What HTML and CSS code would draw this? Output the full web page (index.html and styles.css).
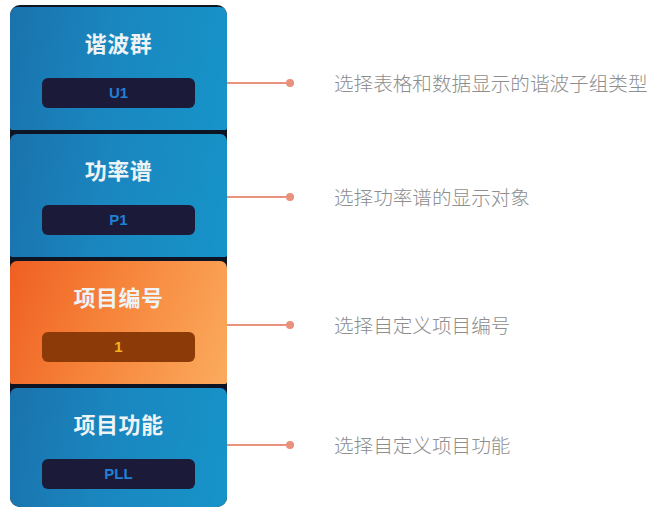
FILE: index.html
```html
<!DOCTYPE html>
<html lang="zh-CN">
<head>
<meta charset="utf-8">
<link rel="stylesheet" href="styles.css">
</head>
<body>
<div class="page">
  <div class="panel">
    <div class="card blue">
      <div class="title">谐波群</div>
      <div class="bar">U1</div>
    </div>
    <div class="card blue">
      <div class="title">功率谱</div>
      <div class="bar">P1</div>
    </div>
    <div class="card orange">
      <div class="title">项目编号</div>
      <div class="bar">1</div>
    </div>
    <div class="card blue last">
      <div class="title">项目功能</div>
      <div class="bar">PLL</div>
    </div>
  </div>
  <div class="notes">
    <div class="note n1"><span class="line"></span><span class="dot"></span><span class="text">选择表格和数据显示的谐波子组类型</span></div>
    <div class="note n2"><span class="line"></span><span class="dot"></span><span class="text">选择功率谱的显示对象</span></div>
    <div class="note n3"><span class="line"></span><span class="dot"></span><span class="text">选择自定义项目编号</span></div>
    <div class="note n4"><span class="line"></span><span class="dot"></span><span class="text">选择自定义项目功能</span></div>
  </div>
</div>
</body>
</html>
```

FILE: styles.css
```css
html, body {
  margin: 0;
  padding: 0;
  background: #ffffff;
}
body {
  width: 653px;
  height: 509px;
  overflow: hidden;
  font-family: "Noto Sans CJK SC", "Noto Sans", sans-serif;
}
.page {
  display: flex;
  flex-direction: row;
  align-items: flex-start;
}
.panel {
  margin-left: 10px;
  margin-top: 5px;
  width: 217px;
  height: 502px;
  background: #0d1424;
  border-radius: 10px;
  overflow: hidden;
  display: flex;
  flex-direction: column;
  gap: 4px;
  padding-top: 2px;
  box-sizing: border-box;
}
.card {
  height: 123px;
  flex: none;
  border-radius: 7px 7px 2px 2px;
  display: flex;
  flex-direction: column;
  align-items: center;
  box-sizing: border-box;
  padding-top: 20px;
}
.card.last {
  flex: 1;
  border-radius: 7px 7px 0 0;
}
.blue {
  background: linear-gradient(100deg, #1a72ac 0%, #1a86bf 45%, #1694c9 100%);
}
.orange {
  background: linear-gradient(110deg, #ef5f22 0%, #f6843a 45%, #fbab5e 100%);
}
.title {
  color: #eef3f6;
  font-size: 22px;
  font-weight: 700;
  line-height: 30px;
  height: 30px;
  letter-spacing: 0.5px;
}
.bar {
  margin-top: 21px;
  width: 153px;
  height: 30px;
  border-radius: 6px;
  background: #1b1a38;
  color: #1f80d4;
  font-family: "Liberation Sans", Arial, sans-serif;
  font-weight: 700;
  font-size: 15px;
  line-height: 30px;
  text-align: center;
}
.orange .bar {
  background: #8c3a08;
  color: #f2b323;
}
.notes {
  display: flex;
  flex-direction: column;
}
.note {
  display: flex;
  align-items: center;
  height: 20px;
}
.n1 { margin-top: 73px; }
.n2 { margin-top: 94px; }
.n3 { margin-top: 108px; }
.n4 { margin-top: 100px; }
.line {
  width: 63px;
  height: 2px;
  background: #e8917b;
}
.dot {
  width: 8px;
  height: 8px;
  border-radius: 50%;
  background: #e8917b;
  margin-left: -4px;
}
.text {
  margin-left: 40px;
  color: #8e8e8e;
  font-size: 19.6px;
  font-weight: 300;
  line-height: 20px;
  white-space: nowrap;
}
```
